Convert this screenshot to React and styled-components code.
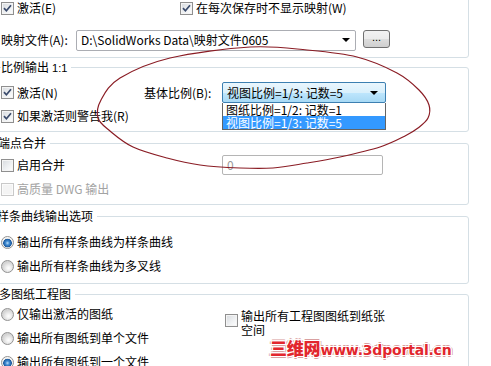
import React from "react";
import styled, { createGlobalStyle } from "styled-components";

const GlobalStyle = createGlobalStyle`
  html, body {
    margin: 0;
    padding: 0;
    background: #ffffff;
    overflow: hidden;
  }
  body {
    font-family: "Noto Sans CJK SC", "Noto Sans", sans-serif;
    font-size: 12px;
    color: #000000;
  }
`;

const Page = styled.div`
  position: relative;
  width: 491px;
  height: 366px;
  overflow: hidden;
`;

const Panel = styled.div`
  margin-left: -14px;
  width: 483px;
`;

const Group = styled.fieldset`
  margin: ${(p) => p.$top}px 0 0;
  padding: ${(p) => p.$pt}px 0 ${(p) => p.$pb}px 14px;
  border: 1px solid #d5dfe5;
  border-radius: 3px;
  min-width: 0;
`;

const Legend = styled.legend`
  padding: 0 4px 0 0;
  margin-left: ${(p) => p.$shift || 0}px;
  line-height: 16px;
  font-size: 12px;
  white-space: nowrap;

  small {
    font-family: "Liberation Sans", sans-serif;
    font-size: 11px;
    margin-left: 3px;
  }
`;

const Rows = styled.div`
  display: flex;
  flex-direction: column;
  gap: ${(p) => p.$gap || 4}px;
`;

const Row = styled.div`
  display: grid;
  grid-template-columns: ${(p) => p.$cols || "auto"};
  align-items: center;
  height: ${(p) => p.$h || 20}px;
  margin-top: ${(p) => p.$mt || 0}px;
`;

const Item = styled.div`
  display: inline-flex;
  align-items: ${(p) => (p.$top ? "flex-start" : "center")};
  gap: 3px;
  white-space: nowrap;
  line-height: 16px;
  color: ${(p) => (p.$disabled ? "#a3a3a3" : "#000000")};
`;

const Box = styled.span`
  flex: none;
  position: relative;
  width: 13px;
  height: 13px;
  box-sizing: border-box;
  border: 1px solid ${(p) => (p.$disabled ? "#c9c9c9" : "#8f8f8f")};
  background: ${(p) =>
    p.$disabled
      ? "#f4f4f4"
      : "linear-gradient(135deg, #d6d9dd 0%, #eef0f2 55%, #ffffff 100%)"};
  box-shadow: inset 0 0 0 1px ${(p) => (p.$disabled ? "#fbfbfb" : "#f4f4f4")};
  margin-top: ${(p) => p.$mt || 0}px;

  svg {
    position: absolute;
    left: 0;
    top: 0;
  }
`;

const Dot = styled.span`
  flex: none;
  width: 13px;
  height: 13px;
  box-sizing: border-box;
  border-radius: 50%;
  border: 1px solid #929292;
  background: ${(p) =>
    p.$on
      ? "radial-gradient(circle at 50% 55%, #b9dcf7 0, #3f8ad2 2px, #1c5a9e 4px, #e8e8e8 4.6px, #ffffff 6px)"
      : "radial-gradient(circle at 60% 65%, #ffffff 0, #f3f3f3 2px, #d4d4d4 6px)"};
`;

const Label = styled.span`
  line-height: 16px;
  white-space: nowrap;
`;

const Combo = styled.div`
  width: ${(p) => p.$w}px;
  height: 21px;
  box-sizing: border-box;
  border: 1px solid #abadb3;
  border-radius: 2px;
  background: #ffffff;
  display: flex;
  align-items: center;
  justify-content: space-between;
  padding: 0 5px 0 4px;
  line-height: 16px;
`;

const Arrow = styled.span`
  width: 0;
  height: 0;
  border-left: 4px solid transparent;
  border-right: 4px solid transparent;
  border-top: 4px solid #000000;
`;

const MoreButton = styled.button`
  width: 27px;
  height: 18px;
  box-sizing: border-box;
  padding: 0 0 4px;
  border: 1px solid #707070;
  border-radius: 3px;
  background: linear-gradient(#f2f2f2 0%, #ebebeb 50%, #dddddd 51%, #cfcfcf 100%);
  font-family: "Liberation Sans", sans-serif;
  font-size: 11px;
  line-height: 10px;
  color: #000000;
  margin-top: -2px;
`;

const FileRow = styled.div`
  display: flex;
  align-items: center;
  height: 22px;
  margin-top: 13px;
  gap: 7px;

  ${Label} {
    width: 68px;
  }
`;

const SelectWrap = styled.div`
  position: relative;
  width: 164px;
`;

const Select = styled.div`
  height: 21px;
  box-sizing: border-box;
  border: 1px solid #3c7fb1;
  border-radius: 2px;
  background: linear-gradient(#eaf6fd 0%, #d9f0fc 50%, #bee6fd 51%, #a7d9f5 100%);
  display: flex;
  align-items: center;
  justify-content: space-between;
  padding: 0 7px 0 4px;
  line-height: 16px;
`;

const List = styled.div`
  position: absolute;
  top: 21px;
  left: 0;
  width: 164px;
  box-sizing: border-box;
  border: 1px solid #646464;
  border-top: none;
  background: #ffffff;
  z-index: 2;
`;

const Option = styled.div`
  height: 13px;
  line-height: 13px;
  padding-left: 3px;
  background: ${(p) => (p.$active ? "#3399ff" : "#ffffff")};
  color: ${(p) => (p.$active ? "#ffffff" : "#000000")};
  white-space: nowrap;
`;

const Field = styled.div`
  width: 161px;
  height: 20px;
  box-sizing: border-box;
  border: 1px solid #b5b5b5;
  border-radius: 2px;
  padding-left: 4px;
  line-height: 18px;
  color: #9a9a9a;
`;

const Wrap = styled.span`
  width: 148px;
  white-space: normal;
  line-height: 14px;
  font-family: "Noto Sans CJK SC", sans-serif;
`;

const SheetGrid = styled.div`
  display: grid;
  grid-template-columns: 224px auto;
  align-items: start;
`;

const Watermark = styled.div`
  position: absolute;
  left: 270px;
  top: 338px;
  font-family: "DejaVu Sans", "Noto Sans CJK SC", sans-serif;
  font-weight: 700;
  font-size: 14px;
  line-height: 20px;
  color: #e2262d;
  letter-spacing: -0.2px;
  text-shadow: 1px 0 0 #fff, -1px 0 0 #fff, 0 1px 0 #fff, 0 -1px 0 #fff,
    1px 1px 0 #fff, -1px -1px 0 #fff, 1px -1px 0 #fff, -1px 1px 0 #fff,
    2px 0 0 #d9a0a0, -2px 0 0 #d9a0a0, 0 2px 0 #d9a0a0, 0 -2px 0 #d9a0a0;

  b {
    font-family: "Noto Sans CJK SC", sans-serif;
    font-size: 17px;
    font-weight: 900;
  }
`;

const Ink = styled.svg`
  position: absolute;
  left: 0;
  top: 0;
  pointer-events: none;
  z-index: 3;
`;

const loop = [
  [250, 47], [307, 50], [357, 57], [397, 73], [419, 90], [429, 105],
  [428, 118], [418, 128], [405, 136], [380, 147], [340, 157], [307, 163],
  [273, 168], [240, 168], [200, 165], [167, 158], [133, 147], [110, 131],
  [98, 118], [101, 100], [120, 78], [170, 58],
];

function smoothPath(p) {
  const n = p.length;
  let d = `M${p[0][0]},${p[0][1]}`;
  for (let i = 0; i < n; i++) {
    const a = p[(i - 1 + n) % n];
    const b = p[i];
    const c = p[(i + 1) % n];
    const e = p[(i + 2) % n];
    const c1 = [b[0] + (c[0] - a[0]) / 6, b[1] + (c[1] - a[1]) / 6];
    const c2 = [c[0] - (e[0] - b[0]) / 6, c[1] - (e[1] - b[1]) / 6];
    d += ` C${c1[0].toFixed(1)},${c1[1].toFixed(1)} ${c2[0].toFixed(1)},${c2[1].toFixed(1)} ${c[0]},${c[1]}`;
  }
  return d;
}

const Checkbox = ({ checked, disabled, children, top, mt }) => (
  <Item $disabled={disabled} $top={top}>
    <Box $disabled={disabled} $mt={mt}>
      {checked && (
        <svg width="11" height="11" viewBox="0 0 11 11">
          <path d="M2 5.2 L4.4 7.8 L9 2.2" fill="none" stroke="#3a4a6b" strokeWidth="1.7" />
        </svg>
      )}
    </Box>
    {children}
  </Item>
);

const Radio = ({ on, children }) => (
  <Item>
    <Dot $on={on} />
    {children}
  </Item>
);

const App = () => {
  return (
    <Page>
      <GlobalStyle />
      <Panel>
        <Group $top={-10} $pt={9} $pb={6}>
          <Row $cols="179px auto" $h={16}>
            <Checkbox checked>激活(E)</Checkbox>
            <Checkbox checked>在每次保存时不显示映射(W)</Checkbox>
          </Row>
          <FileRow>
            <Label>映射文件(A):</Label>
            <Combo $w={280}>
              <span>{"D:\\SolidWorks Data\\映射文件0605"}</span>
              <Arrow />
            </Combo>
            <MoreButton>...</MoreButton>
          </FileRow>
        </Group>

        <Group $top={1} $pt={6} $pb={5}>
          <Legend>
            比例输出<small>1:1</small>
          </Legend>
          <Rows>
            <Row $cols="143px 78px 164px">
              <Checkbox checked>激活(N)</Checkbox>
              <Label>基体比例(B):</Label>
              <SelectWrap>
                <Select>
                  <span>视图比例=1/3: 记数=5</span>
                  <Arrow />
                </Select>
                <List>
                  <Option>图纸比例=1/2: 记数=1</Option>
                  <Option $active>视图比例=1/3: 记数=5</Option>
                </List>
              </SelectWrap>
            </Row>
            <Row>
              <Checkbox checked>如果激活则警告我(R)</Checkbox>
            </Row>
          </Rows>
        </Group>

        <Group $top={3} $pt={4} $pb={5}>
          <Legend $shift={-3}>端点合并</Legend>
          <Rows>
            <Row $cols="221px 161px">
              <Checkbox>启用合并</Checkbox>
              <Field>0</Field>
            </Row>
            <Row>
              <Checkbox disabled>高质量 DWG 输出</Checkbox>
            </Row>
          </Rows>
        </Group>

        <Group $top={3} $pt={8} $pb={7}>
          <Legend $shift={-4}>样条曲线输出选项</Legend>
          <Rows>
            <Row>
              <Radio on>输出所有样条曲线为样条曲线</Radio>
            </Row>
            <Row>
              <Radio>输出所有样条曲线为多叉线</Radio>
            </Row>
          </Rows>
        </Group>

        <Group $top={2} $pt={2} $pb={6}>
          <Legend $shift={-2}>多图纸工程图</Legend>
          <SheetGrid>
            <Rows>
              <Row>
                <Radio>仅输出激活的图纸</Radio>
              </Row>
              <Row>
                <Radio>输出所有图纸到单个文件</Radio>
              </Row>
              <Row>
                <Radio on>输出所有图纸到一个文件</Radio>
              </Row>
            </Rows>
            <Row $h={30} $mt={4}>
              <Checkbox top mt={5}>
                <Wrap>输出所有工程图图纸到纸张空间</Wrap>
              </Checkbox>
            </Row>
          </SheetGrid>
        </Group>
      </Panel>

      <Ink width="491" height="366" viewBox="0 0 491 366">
        <path d={smoothPath(loop)} fill="none" stroke="#8a1c24" strokeWidth="1.2" />
      </Ink>

      <Watermark>
        <b>三维网</b>www.3dportal.cn
      </Watermark>
    </Page>
  );
};

export default App;
